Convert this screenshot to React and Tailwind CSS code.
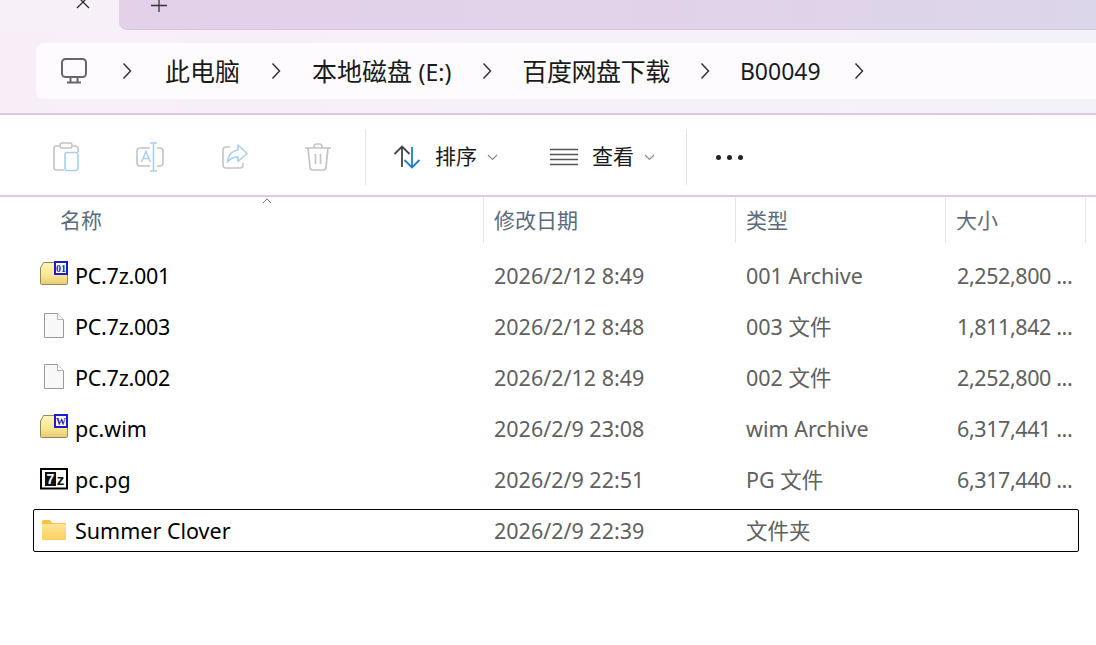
const font = "[font-family:'Noto_Sans','Noto_Sans_CJK_SC',sans-serif]";

function Chevron({ className = "" }) {
  return (
    <svg width="10" height="18" viewBox="0 0 10 18" fill="none" stroke="#333" strokeWidth="1.5" className={className}>
      <path d="M1.5 1.5 8.5 9 1.5 16.5" />
    </svg>
  );
}

function Caret({ className = "" }) {
  return (
    <svg width="11" height="7" viewBox="0 0 11 7" fill="none" stroke="#8a8a8a" strokeWidth="1.1" className={className}>
      <path d="M1 1l4.5 4.5L10 1" />
    </svg>
  );
}

function Monitor() {
  return (
    <svg width="26" height="26" viewBox="0 0 26 26" fill="none" stroke="#666" strokeWidth="2">
      <rect x="1" y="1" width="24" height="18" rx="3.5" />
      <path d="M9.5 19v5M16.5 19v5M6 24.5h14" />
    </svg>
  );
}

function ClipboardIcon() {
  return (
    <svg width="28" height="30" viewBox="0 0 28 30" fill="none" strokeWidth="1.6">
      <path d="M7 4H4.5A2.5 2.5 0 0 0 2 6.5v19A2.5 2.5 0 0 0 4.5 28H12M21 4h2.5A2.5 2.5 0 0 1 26 6.5V10" stroke="#c4c4c4" />
      <rect x="8" y="1" width="12" height="5" rx="2.2" stroke="#c4c4c4" />
      <rect x="13" y="10.5" width="13" height="18" rx="2" stroke="#a8d0ee" />
    </svg>
  );
}

function RenameIcon() {
  return (
    <svg width="30" height="30" viewBox="0 0 30 30" fill="none" strokeWidth="1.6">
      <path d="M15 6H5a3 3 0 0 0-3 3v12a3 3 0 0 0 3 3h10M22 6h3a3 3 0 0 1 3 3v12a3 3 0 0 1-3 3h-3" stroke="#c4c4c4" />
      <path d="M6.5 20 11 9.5 15.5 20M8 16.5h6" stroke="#a8d0ee" />
      <path d="M15 1h7M18.5 1v28M15 29h7" stroke="#a8d0ee" />
    </svg>
  );
}

function ShareIcon() {
  return (
    <svg width="28" height="28" viewBox="0 0 28 28" fill="none" strokeWidth="1.6">
      <path d="M9 4H5a3 3 0 0 0-3 3v15a3 3 0 0 0 3 3h14a3 3 0 0 0 3-3v-2" stroke="#c4c4c4" />
      <path d="M17 2l9 8.5-9 8v-4.5c-5 0-8 1.500-10.500 5 .5-6.500 4-11 10.500-12z" stroke="#a8d0ee" strokeLinejoin="round" />
    </svg>
  );
}

function TrashIcon() {
  return (
    <svg width="26" height="28" viewBox="0 0 26 28" fill="none" stroke="#c4c4c4" strokeWidth="1.7">
      <path d="M0 5h26M9 5V3.500A2.500 2.500 0 0 1 11.500 1h3A2.500 2.500 0 0 1 17 3.500V5M3 5l2 19a3 3 0 0 0 3 3h10a3 3 0 0 0 3-3l2-19M10.500 11v10M15.500 11v10" />
    </svg>
  );
}

function SortIcon() {
  return (
    <svg width="28" height="24" viewBox="0 0 28 24" fill="none" strokeWidth="1.8">
      <path d="M9 22V2M1.500 9 9 1.500 16.500 9" stroke="#444" />
      <path d="M19 2v20M11.500 15 19 22.500 26.500 15" stroke="#1d80cf" />
    </svg>
  );
}

function ViewIcon() {
  return (
    <svg width="28" height="18" viewBox="0 0 28 18" fill="none" stroke="#555" strokeWidth="1.500">
      <path d="M0 1.500h28M0 6.500h28M0 11.500h28M0 16.500h28" />
    </svg>
  );
}

function ArchiveIcon({ label }) {
  return (
    <svg width="28" height="30" viewBox="0 0 28 30">
      <defs>
        <linearGradient id={"arc" + label} x1="0" y1="0" x2="0" y2="1">
          <stop offset="0" stopColor="#fdf6bf" />
          <stop offset="0.6" stopColor="#f8e68d" />
          <stop offset="1" stopColor="#e8c878" />
        </linearGradient>
      </defs>
      <path d="M.5 7 3.500 1.500H16v5h11.500v16a1 1 0 0 1-1 1H1.500a1 1 0 0 1-1-1z" fill={"url(#arc" + label + ")"} stroke="#8f8a5a" />
      <rect x="14" y="0" width="14" height="14" fill="#1c1cc8" />
      <rect x="16" y="2" width="10" height="10" fill="#fff" />
      <text x="21" y="10.500" textAnchor="middle" fontSize="10" fontWeight="700" fill="#1c1cc8" fontFamily="'Liberation Serif',serif">{label}</text>
    </svg>
  );
}

function FileIcon() {
  return (
    <svg width="28" height="30" viewBox="0 0 28 30">
      <path d="M4.500 1.500h13l6 6v18h-19z" fill="#f8f8f8" stroke="#9a9a9a" />
      <path d="M17.500 1.500v6h6" fill="#fff" stroke="#b5b5b5" />
    </svg>
  );
}

function SevenZipIcon() {
  return (
    <svg width="28" height="30" viewBox="0 0 28 30">
      <rect x="1" y="4" width="26" height="19.500" fill="#fff" stroke="#000" strokeWidth="2" />
      <rect x="5" y="7" width="11" height="14" fill="#111" />
      <text x="10.500" y="19" textAnchor="middle" fontSize="14" fontWeight="700" fill="#fff" fontFamily="'Liberation Sans',sans-serif">7</text>
      <text x="20.500" y="20" textAnchor="middle" fontSize="15" fontWeight="700" fill="#111" fontFamily="'Liberation Sans',sans-serif">z</text>
    </svg>
  );
}

function FolderIcon() {
  return (
    <svg width="28" height="30" viewBox="0 0 28 30">
      <defs>
        <linearGradient id="fold" x1="0" y1="0" x2="0" y2="1">
          <stop offset="0" stopColor="#ffe39a" />
          <stop offset="1" stopColor="#ffd05c" />
        </linearGradient>
      </defs>
      <path d="M2 5.500A1.500 1.500 0 0 1 3.500 4h6l3 3H26v3H2z" fill="#f7c143" />
      <rect x="2" y="8" width="24" height="16" rx="1" fill="url(#fold)" />
    </svg>
  );
}

const files = [
  { name: "PC.7z.001", date: "2026/2/12 8:49", type: "001 Archive", size: "2,252,800 ...", icon: <ArchiveIcon label="01" />, tight: true },
  { name: "PC.7z.003", date: "2026/2/12 8:48", type: "003 文件", size: "1,811,842 ...", icon: <FileIcon />, tight: true },
  { name: "PC.7z.002", date: "2026/2/12 8:49", type: "002 文件", size: "2,252,800 ...", icon: <FileIcon />, tight: true },
  { name: "pc.wim", date: "2026/2/9 23:08", type: "wim Archive", size: "6,317,441 ...", icon: <ArchiveIcon label="W" /> },
  { name: "pc.pg", date: "2026/2/9 22:51", type: "PG 文件", size: "6,317,440 ...", icon: <SevenZipIcon /> },
  { name: "Summer Clover", date: "2026/2/9 22:39", type: "文件夹", size: "", icon: <FolderIcon />, selected: true },
];

export default function App() {
  return (
    <div className={`h-[645px] w-[1096px] overflow-hidden bg-white ${font}`}>
      {/* tab strip */}
      <div className="flex h-[30px] bg-[#f7f0f9]">
        <div className="flex w-[119px] shrink-0 items-start pl-[74px]">
          <svg width="16" height="9" viewBox="0 0 16 9" fill="none" stroke="#222" strokeWidth="1.200">
            <path d="M3 -4 15 8M15 -4 3 8" />
          </svg>
        </div>
        <div className="flex flex-1 items-start rounded-bl-[8px] border-b border-[#d6c6dc] bg-linear-to-r from-[#e3d1ea] via-[#e2d2ea] to-[#dcd6ea] pl-[32px]">
          <svg width="16" height="13" viewBox="0 0 16 13" fill="none" stroke="#333" strokeWidth="1.300">
            <path d="M0 5.500h16M8 0v12" />
          </svg>
        </div>
      </div>

      {/* address bar */}
      <div className="h-[83px] bg-linear-to-r from-[#f8eef8] to-[#f3f2f8] pl-[36px] pt-[13px]">
        <div className="flex h-[56px] items-center rounded-l-[8px] bg-[#fdfbfe] pl-[25px] text-[25px] leading-none text-[#1a1a1a]">
          <Monitor />
          <Chevron className="ml-[35px]" />
          <span className="ml-[33px]">此电脑</span>
          <Chevron className="ml-[31px]" />
          <span className="ml-[31px]">本地磁盘 <span className="text-[23px]">(E:)</span></span>
          <Chevron className="ml-[31px]" />
          <span className="ml-[30px] tracking-[-0.4px]">百度网盘下载</span>
          <Chevron className="ml-[30px]" />
          <span className="ml-[30px] text-[23px]">B00049</span>
          <Chevron className="ml-[33px]" />
        </div>
      </div>

      {/* toolbar */}
      <div className="flex h-[84px] items-center border-y-2 border-[#dccbdd] bg-white pl-[52px] pt-[4px] text-[21px] text-[#1a1a1a]">
        <ClipboardIcon />
        <div className="ml-[55px]"><RenameIcon /></div>
        <div className="ml-[56px]"><ShareIcon /></div>
        <div className="ml-[56px]"><TrashIcon /></div>
        <div className="ml-[34px] h-[55px] w-px bg-[#e4e4e4]" />
        <div className="ml-[27px]"><SortIcon /></div>
        <span className="ml-[14px]">排序</span>
        <Caret className="ml-[10px]" />
        <div className="ml-[52px]"><ViewIcon /></div>
        <span className="ml-[14px]">查看</span>
        <Caret className="ml-[10px]" />
        <div className="ml-[31px] h-[55px] w-px bg-[#e4e4e4]" />
        <div className="ml-[29px] flex gap-[6px]">
          <div className="size-[5px] rounded-full bg-[#222]" />
          <div className="size-[5px] rounded-full bg-[#222]" />
          <div className="size-[5px] rounded-full bg-[#222]" />
        </div>
      </div>

      {/* column header */}
      <div className="relative flex h-[46px] text-[21px] text-[#5c6b7c]">
        <svg width="10" height="6" viewBox="0 0 10 6" fill="none" stroke="#777" strokeWidth="1" className="absolute left-[262px] top-[1px]">
          <path d="M1 5l4-4 4 4" />
        </svg>
        <div className="flex w-[484px] items-center border-r border-[#e6e6e6] pl-[60px] pt-[2px]">名称</div>
        <div className="flex w-[252px] items-center border-r border-[#e6e6e6] pl-[10px] pt-[2px]">修改日期</div>
        <div className="flex w-[210px] items-center border-r border-[#e6e6e6] pl-[10px] pt-[2px]">类型</div>
        <div className="flex w-[140px] items-center border-r border-[#e6e6e6] pl-[10px] pt-[2px]">大小</div>
      </div>

      {/* file rows */}
      <div className="ml-[33px] mt-[11px] flex w-[1046px] flex-col gap-[8px] text-[21.500px]">
        {files.map((f) => (
          <div
            key={f.name}
            className={`flex h-[43px] items-center rounded-[2px] border ${f.selected ? "border-black" : "border-transparent"}`}
          >
            <div className="ml-[6px] w-[28px]">{f.icon}</div>
            <div className={`ml-[7px] w-[419px] pt-[2px] text-black ${f.tight ? "tracking-[-0.25px]" : ""}`}>{f.name}</div>
            <div className="w-[252px] pt-[2px] text-[#606060]">{f.date}</div>
            <div className="w-[211px] pt-[2px] text-[#606060]">{f.type}</div>
            <div className="pt-[2px] tracking-[-0.4px] text-[#606060]">{f.size}</div>
          </div>
        ))}
      </div>
    </div>
  );
}
